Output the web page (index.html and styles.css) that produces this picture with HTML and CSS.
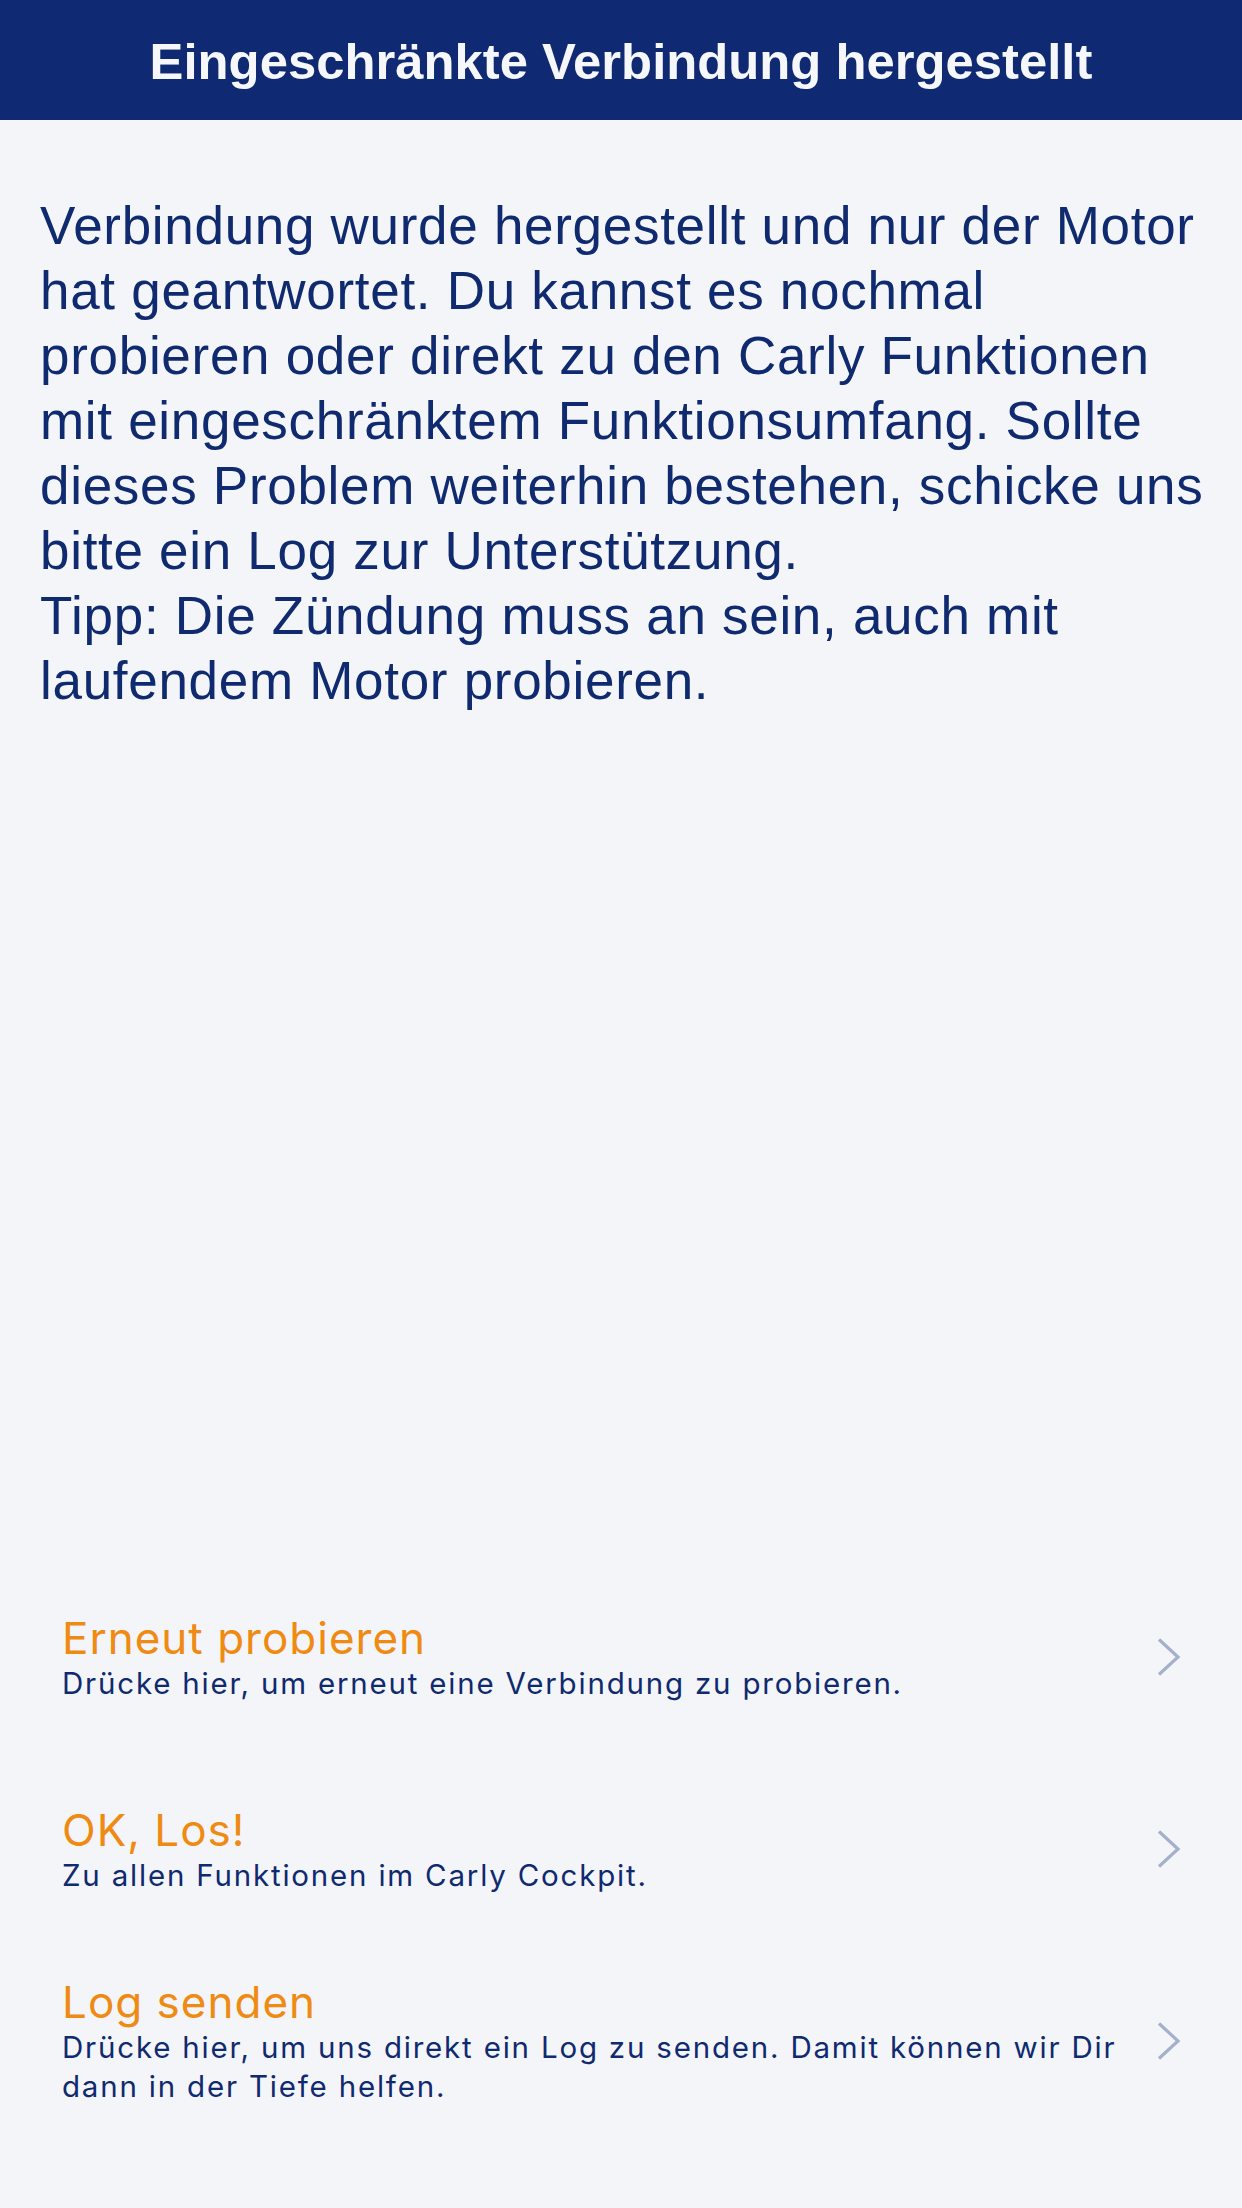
FILE: index.html
```html
<!DOCTYPE html>
<html lang="de">
<head>
<meta charset="utf-8">
<title>Eingeschränkte Verbindung hergestellt</title>
<link rel="stylesheet" href="styles.css">
</head>
<body>
<div class="screen">
  <header class="topbar">
    <h1 class="topbar-title">Eingeschränkte Verbindung hergestellt</h1>
  </header>
  <main class="content">
    <p class="message">Verbindung wurde hergestellt und nur der Motor hat geantwortet. Du kannst es nochmal probieren oder direkt zu den Carly Funktionen mit eingeschränktem Funktionsumfang. Sollte dieses Problem weiterhin bestehen, schicke uns bitte ein Log zur Unterstützung.<br>Tipp: Die Zündung muss an sein, auch mit laufendem Motor probieren.</p>
  </main>
  <nav class="actions">
    <a class="action">
      <div class="action-text">
        <div class="action-title">Erneut probieren</div>
        <div class="action-sub">Drücke hier, um erneut eine Verbindung zu probieren.</div>
      </div>
      <svg class="chevron" viewBox="0 0 24 38" width="24" height="38"><path d="M2 1.5 L21 19 L2 36.5" fill="none" stroke="#a5b0cb" stroke-width="3.2"/></svg>
    </a>
    <a class="action">
      <div class="action-text">
        <div class="action-title">OK, Los!</div>
        <div class="action-sub">Zu allen Funktionen im Carly Cockpit.</div>
      </div>
      <svg class="chevron" viewBox="0 0 24 38" width="24" height="38"><path d="M2 1.5 L21 19 L2 36.5" fill="none" stroke="#a5b0cb" stroke-width="3.2"/></svg>
    </a>
    <a class="action">
      <div class="action-text">
        <div class="action-title">Log senden</div>
        <div class="action-sub">Drücke hier, um uns direkt ein Log zu senden. Damit können wir Dir dann in der Tiefe helfen.</div>
      </div>
      <svg class="chevron" viewBox="0 0 24 38" width="24" height="38"><path d="M2 1.5 L21 19 L2 36.5" fill="none" stroke="#a5b0cb" stroke-width="3.2"/></svg>
    </a>
  </nav>
</div>
</body>
</html>
```
FILE: styles.css
```css
* { box-sizing: border-box; }
html, body { margin: 0; padding: 0; }
body {
  background: #f4f5f9;
  font-family: "Liberation Sans", Arial, sans-serif;
  color: #0f2a6f;
}
.screen {
  width: 1242px;
  height: 2208px;
  display: flex;
  flex-direction: column;
  overflow: hidden;
}
.topbar {
  height: 120px;
  flex: 0 0 120px;
  background: #0f2a72;
  display: flex;
  align-items: center;
  justify-content: center;
  padding-top: 4px;
}
.topbar-title {
  margin: 0;
  color: #f6f7fb;
  font-size: 50.8px;
  font-weight: bold;
  line-height: 56px;
}
.content {
  padding: 73px 16px 0 40px;
}
.message {
  margin: 0;
  font-size: 53px;
  line-height: 65px;
  letter-spacing: 0.7px;
  color: #0f2a6f;
}
.actions {
  margin-top: auto;
  padding-bottom: 71px;
  display: flex;
  flex-direction: column;
}
.action {
  height: 192px;
  display: flex;
  align-items: center;
  padding: 0 61px 0 62px;
  gap: 30px;
}
.action-text {
  flex: 1;
  display: flex;
  flex-direction: column;
}
.action-title {
  font-family: "Inter", "Liberation Sans", sans-serif;
  font-size: 44px;
  line-height: 52px;
  letter-spacing: 1px;
  color: #ef8a12;
}
.action-sub {
  font-family: "Inter", "Liberation Sans", sans-serif;
  font-size: 29.5px;
  line-height: 39px;
  letter-spacing: 1.8px;
  color: #0f2a6f;
}
.chevron {
  flex: 0 0 24px;
  display: block;
}
```
